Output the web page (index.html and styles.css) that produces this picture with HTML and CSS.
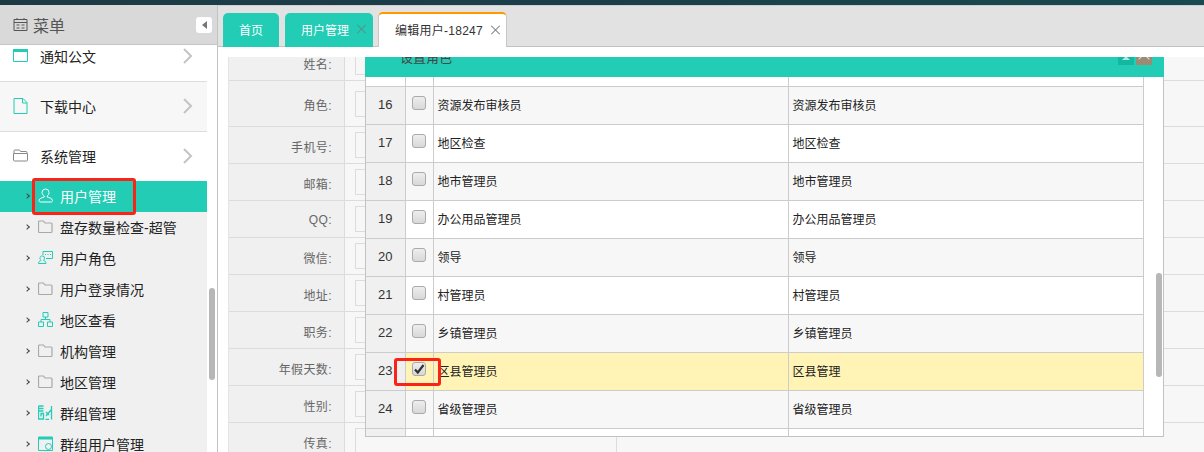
FILE: index.html
```html
<!DOCTYPE html>
<html lang="zh-CN">
<head>
<meta charset="utf-8">
<title>编辑用户</title>
<link rel="stylesheet" href="styles.css">
</head>
<body>
<div class="app">
  <div class="topbar"></div>
  <div class="shell">
    <aside class="side">
      <div class="side-head">
        <svg class="cal" viewBox="0 0 15 15"><path d="M1 2.500h13v11H1zM1 5.500h13M4 1v2M11 1v2M3.500 8h3M8.500 8h3M3.500 11h3M8.500 11h3" fill="none" stroke="#555" stroke-width="1"/></svg>
        <span class="side-title">菜单</span>
        <button class="collapse"><span class="tri"></span></button>
      </div>
      <div class="side-scroll">
        <nav class="menu">
          <div class="top-item">
            <svg class="top-ico" viewBox="0 0 15 13"><path d="M.5.5h14v12H.5z" fill="none" stroke="#22ccb5"/><path d="M0 0h15v3H0z" fill="#22ccb5"/></svg>
            <span>通知公文</span><svg class="chev" viewBox="0 0 10 16"><path d="M1 1l7 7-7 7" fill="none" stroke="#c4c4c4" stroke-width="2"/></svg>
          </div>
          <div class="top-item alt">
            <svg class="top-ico doc" viewBox="0 0 14 16"><path d="M.5.5h9l4 4v11H.5zM9 .5v4.500h4.500" fill="none" stroke="#22ccb5"/></svg>
            <span>下载中心</span><svg class="chev" viewBox="0 0 10 16"><path d="M1 1l7 7-7 7" fill="none" stroke="#c4c4c4" stroke-width="2"/></svg>
          </div>
          <div class="top-item plain">
            <svg class="top-ico" viewBox="0 0 15 13"><path d="M1 4V2a1 1 0 0 1 1-1h4.500l1 1.500H13a1 1 0 0 1 1 1V4M.5 4.500h14V11a1 1 0 0 1-1 1h-12a1 1 0 0 1-1-1z" fill="none" stroke="#888"/></svg>
            <span>系统管理</span><svg class="chev" viewBox="0 0 10 16"><path d="M1 1l7 7-7 7" fill="none" stroke="#c4c4c4" stroke-width="2"/></svg>
          </div>
          <ul class="sub">
            <li class="active"><i class="arrow"></i><svg class="sub-ico" viewBox="0 0 15 15"><path d="M7.500 1a3.500 3.500 0 0 1 3.500 3.500c0 1.500-.8 2.900-1.800 3.500v1c1.500.6 5.300 1.200 5.300 3.500 0 1-.7 1.500-1.500 1.500H2.500c-.8 0-1.500-.5-1.500-1.500 0-2.300 3.800-2.900 5.300-3.500V8C5.300 7.400 4 6 4 4.500A3.500 3.500 0 0 1 7.500 1z" fill="none" stroke="#fff"/></svg><span>用户管理</span></li>
            <li><i class="arrow"></i><svg class="sub-ico" viewBox="0 0 15 13"><path d="M.5 2a1 1 0 0 1 1-1h4l1.500 2h6a1 1 0 0 1 1 1v7.500a1 1 0 0 1-1 1h-11.500a1 1 0 0 1-1-1z" fill="none" stroke="#a8a8a8" stroke-width="1.200"/></svg><span>盘存数量检查-超管</span></li>
            <li><i class="arrow"></i><svg class="sub-ico" viewBox="0 0 15 15"><path d="M5 1.500h9.500v7H8M5 1.500V5M7 4.500h1M9.500 4.500h1M12 4.500h1M4.500 6a2 2 0 0 1 2 2.200c0 1-.5 1.800-1 2.200.8.500 2.500.8 2.500 3.100H.5c0-2.300 1.800-2.600 2.500-3.100-.6-.4-1-1.200-1-2.200A2 2 0 0 1 4.500 6z" fill="none" stroke="#22ccb5"/></svg><span>用户角色</span></li>
            <li><i class="arrow"></i><svg class="sub-ico" viewBox="0 0 15 13"><path d="M.5 2a1 1 0 0 1 1-1h4l1.500 2h6a1 1 0 0 1 1 1v7.500a1 1 0 0 1-1 1h-11.500a1 1 0 0 1-1-1z" fill="none" stroke="#a8a8a8" stroke-width="1.200"/></svg><span>用户登录情况</span></li>
            <li><i class="arrow"></i><svg class="sub-ico" viewBox="0 0 15 15"><path d="M5 .5h5v4.500H5zM.5 10h5v4.500h-5zM9.500 10h5v4.500h-5zM7.500 5v2.500M3 10V7.500h9V10" fill="none" stroke="#22ccb5"/></svg><span>地区查看</span></li>
            <li><i class="arrow"></i><svg class="sub-ico" viewBox="0 0 15 13"><path d="M.5 2a1 1 0 0 1 1-1h4l1.500 2h6a1 1 0 0 1 1 1v7.500a1 1 0 0 1-1 1h-11.500a1 1 0 0 1-1-1z" fill="none" stroke="#a8a8a8" stroke-width="1.200"/></svg><span>机构管理</span></li>
            <li><i class="arrow"></i><svg class="sub-ico" viewBox="0 0 15 13"><path d="M.5 2a1 1 0 0 1 1-1h4l1.500 2h6a1 1 0 0 1 1 1v7.500a1 1 0 0 1-1 1h-11.500a1 1 0 0 1-1-1z" fill="none" stroke="#a8a8a8" stroke-width="1.200"/></svg><span>地区管理</span></li>
            <li><i class="arrow"></i><svg class="sub-ico" viewBox="0 0 15 15"><path d="M.5 1h5M.5 3.500h5M.5 6h5M.5 1v13h5V8.500H3v3M7.500 14.500h3.500M13.500 1v13.500M8 11l5-6M8 7l3 3" fill="none" stroke="#22ccb5" stroke-width="1.300"/></svg><span>群组管理</span></li>
            <li><i class="arrow"></i><svg class="sub-ico" viewBox="0 0 15 15"><path d="M.5 1h14v13.500H.500z" fill="none" stroke="#22ccb5"/><path d="M0 1h15v2.500H0z" fill="#22ccb5"/><circle cx="10.500" cy="10.500" r="3" fill="none" stroke="#22ccb5"/></svg><span>群组用户管理</span></li>
          </ul>
        </nav>
        <div class="side-thumb"></div>
      </div>
    </aside>
    <main class="main">
      <div class="tabs">
        <div class="tab">首页</div>
        <div class="tab closable">用户管理<span class="x"></span></div>
        <div class="tab current">编辑用户-18247<span class="x"></span></div>
      </div>
      <div class="gap"></div>
      <div class="content">
        <div class="form">
          <div class="frow"><label>姓名:</label><div class="val"><span class="box"></span></div></div>
          <div class="frow tall"><label>角色:</label><div class="val"><span class="box"></span></div></div>
          <div class="frow"><label>手机号:</label><div class="val"><span class="box"></span></div></div>
          <div class="frow"><label>邮箱:</label><div class="val"><span class="box"></span></div></div>
          <div class="frow"><label>QQ:</label><div class="val"><span class="box"></span></div></div>
          <div class="frow"><label>微信:</label><div class="val"><span class="box"></span></div></div>
          <div class="frow"><label>地址:</label><div class="val"><span class="box"></span></div></div>
          <div class="frow"><label>职务:</label><div class="val"><span class="box"></span></div></div>
          <div class="frow"><label>年假天数:</label><div class="val"><span class="box"></span></div></div>
          <div class="frow"><label>性别:</label><div class="val"><span class="box"></span></div></div>
          <div class="frow"><label>传真:</label><div class="val"><span class="box"></span></div></div>
        </div>
        <section class="modal">
          <header class="modal-head">
            <span class="modal-title">设置角色</span>
            <span class="mbtn up"><i></i></span>
            <span class="mbtn close"><i></i></span>
          </header>
          <div class="modal-body">
            <table class="grid">
              <colgroup><col class="c-no"><col class="c-ck"><col class="c-a"><col class="c-b"></colgroup>
              <tr class="blank"><td class="no"></td><td></td><td></td><td></td></tr>
              <tr class="even"><td class="no">16</td><td class="ck"><span class="cb"></span></td><td>资源发布审核员</td><td>资源发布审核员</td></tr>
              <tr><td class="no">17</td><td class="ck"><span class="cb"></span></td><td>地区检查</td><td>地区检查</td></tr>
              <tr class="even"><td class="no">18</td><td class="ck"><span class="cb"></span></td><td>地市管理员</td><td>地市管理员</td></tr>
              <tr><td class="no">19</td><td class="ck"><span class="cb"></span></td><td>办公用品管理员</td><td>办公用品管理员</td></tr>
              <tr class="even"><td class="no">20</td><td class="ck"><span class="cb"></span></td><td>领导</td><td>领导</td></tr>
              <tr><td class="no">21</td><td class="ck"><span class="cb"></span></td><td>村管理员</td><td>村管理员</td></tr>
              <tr class="even"><td class="no">22</td><td class="ck"><span class="cb"></span></td><td>乡镇管理员</td><td>乡镇管理员</td></tr>
              <tr class="picked"><td class="no">23</td><td class="ck"><span class="cb"><svg viewBox="0 0 12 12"><path d="M2 6.500l2.800 3L10.500 2" fill="none" stroke="#333" stroke-width="2.200"/></svg></span></td><td>区县管理员</td><td>区县管理</td></tr>
              <tr class="even"><td class="no">24</td><td class="ck"><span class="cb"></span></td><td>省级管理员</td><td>省级管理员</td></tr>
              <tr class="rest"><td class="no"></td><td></td><td></td><td></td></tr>
            </table>
            <div class="modal-track"><div class="modal-thumb"></div></div>
          </div>
        </section>
      </div>
    </main>
  </div>
  <div class="mark mark-user"></div>
  <div class="mark mark-check"></div>
</div>
</body>
</html>
```
FILE: styles.css
```css
* { box-sizing: border-box; }
html, body { margin: 0; padding: 0; }
body { font-family: "Liberation Sans", "Noto Sans CJK SC", sans-serif; font-size: 12px; color: #222; background: #fff; }
.app { position: relative; width: 1204px; height: 452px; overflow: hidden; display: flex; flex-direction: column; }
.topbar { height: 5px; flex: none; background: linear-gradient(90deg, #1c3a45, #1b3f49 50%, #174b4f); }
.shell { flex: 1; display: flex; min-height: 0; }

/* sidebar */
.side { width: 218px; flex: none; display: flex; flex-direction: column; border-right: 1px solid #c2c2c2; background: #fff; }
.side-head { height: 40px; flex: none; display: flex; align-items: center; padding: 0 5px 0 13px; background: #d9d9d9; border-bottom: 1px solid #c6c6c6; }
.cal { width: 15px; height: 15px; margin-right: 5px; }
.side-title { font-size: 16px; color: #555; flex: 1; }
.collapse { width: 16px; height: 16px; margin-right: 0; padding: 0; border: 0; border-radius: 3px; background: #fff; display: flex; align-items: center; justify-content: center; }
.tri { width: 0; height: 0; border: 4px solid transparent; border-right: 5px solid #777; border-left: 0; }
.side-scroll { flex: 1; display: flex; overflow: hidden; position: relative; min-height: 0; }
.menu { width: 207px; flex: none; margin-top: -13px; }
.top-item { height: 50px; display: flex; align-items: center; padding: 0 0 2px 13px; font-size: 14px; color: #222; border-bottom: 1px solid #ddd; background: #fff; }
.top-item.alt { background: #f7f7f7; }
.top-item.plain { height: 49px; border-bottom: 0; }
.top-item span { flex: 1; padding-left: 12px; }
.top-ico { width: 15px; height: 13px; flex: none; }
.top-ico.doc { height: 16px; }
.chev { width: 10px; height: 16px; margin-right: 14px; flex: none; }
.sub { margin: 0; padding: 0; list-style: none; background: #f0f0f0; }
.sub li { height: 31px; display: flex; align-items: center; padding: 0 0 2px 25px; font-size: 14px; color: #222; }
.sub li.active { background: #22ccb5; color: #fff; }
.arrow { width: 4px; height: 4px; flex: none; margin-right: 9px; border-top: 1px solid #444; border-right: 1px solid #444; transform: rotate(45deg); }
.sub-ico { width: 15px; height: 15px; flex: none; margin-right: 7px; }
.side-thumb { position: absolute; left: 209px; top: 243px; width: 6px; height: 92px; border-radius: 3px; background: #b7b7b7; }

/* main */
.main { flex: 1; min-width: 0; display: flex; flex-direction: column; }
.tabs { height: 42px; flex: none; display: flex; align-items: flex-end; gap: 6px; padding-left: 5px; background: #e2e2e2; border-bottom: 1px solid #c2c2c2; border-top: 1px solid #cfcfcf; }
.tab { height: 34px; margin-bottom: -1px; padding: 0 16px 2px; display: flex; align-items: center; border-radius: 5px 5px 0 0; background: #22ccb5; color: #fff; font-size: 12px; }
.tab.closable { padding-right: 7px; }
.tab.current { position: relative; height: 35px; margin-bottom: -1px; margin-left: -1px; padding: 0 6px 2px 16px; background: #fff; color: #333; letter-spacing: .25px; border: 1px solid #c8c8c8; border-top: 2px solid #f90; border-bottom: 0; }
.x { position: relative; width: 10px; height: 10px; margin-left: 7px; }
.x::before, .x::after { content: ""; position: absolute; left: 5px; top: -1px; width: 1px; height: 12px; background: #777; transform: rotate(45deg); }
.x::after { transform: rotate(-45deg); }
.tab.closable .x::before, .tab.closable .x::after { background: #5b8f86; }
.gap { height: 10px; flex: none; background: #fff; }
.content { flex: 1; position: relative; overflow: hidden; min-height: 0; padding-left: 10px; }

/* form behind the dialog */
.form { margin-top: -13px; background: #f7f7f7; border-left: 1px solid #e4e4e4; }
.frow { height: 37px; display: flex; border-bottom: 1px solid #dcdcdc; }
.frow.tall { height: 46px; }
.frow label { width: 116px; flex: none; display: flex; align-items: center; justify-content: flex-end; padding: 2px 12px 0 0; background: #f0f0f0; border-right: 1px solid #dcdcdc; color: #666; font-size: 12px; letter-spacing: .4px; }
.val { flex: 1; display: flex; align-items: center; padding-left: 10px; }
.box { width: 262px; height: 26px; border: 1px solid #dcdcdc; background: #f7f7f7; }

/* dialog */
.modal { position: absolute; left: 147px; top: -20px; width: 799px; height: 400px; display: flex; flex-direction: column; background: #fff; border: 1px solid #c2c2c2; border-top: 0; }
.modal-head { height: 40px; flex: none; display: flex; align-items: flex-start; padding: 12px 12px 0 35px; background: #22ccb5; position: relative; margin-left: -1px; margin-right: -1px; }
.modal-title { flex: 1; font-size: 13px; line-height: 18px; color: #444; }
.mbtn { width: 16px; height: 28px; margin-top: -12px; margin-left: 2px; display: flex; align-items: flex-end; justify-content: center; padding-bottom: 5px; overflow: hidden; }
.mbtn.up { background: #14b8a0; }
.mbtn.close { background: #9c8a75; }
.mbtn.up i { width: 0; height: 0; border: 4px solid transparent; border-bottom: 4px solid #a8ece0; border-top: 0; }
.mbtn.close i { width: 8px; height: 8px; margin-bottom: -3px; border-top: 1px solid #cfe8dc; border-left: 1px solid #cfe8dc; transform: rotate(45deg); }
.modal-body { flex: 1; display: flex; min-height: 0; overflow: hidden; }
.grid { width: 777px; flex: none; table-layout: fixed; border-collapse: collapse; align-self: flex-start; }
.c-no { width: 39px; }
.c-ck { width: 28px; }
.c-a { width: 355px; }
.c-b { width: 355px; }
.grid td { height: 38px; padding: 0 0 2px 4px; border-right: 1px solid #ccc; border-bottom: 1px solid #ccc; font-size: 12px; color: #222; }
.grid tr.blank td { height: 9px; padding: 0; background: #fff; }
.grid tr.rest td { height: 8px; padding: 0; border-bottom: 0; }
.grid td.no { padding: 0 0 1px; text-align: center; background: #f0f0f0; font-size: 13px; color: #333; }
.grid td.ck { padding: 0; text-align: center; }
.grid tr.even td { background: #f7f7f7; }
.grid tr.even td.no { background: #f0f0f0; }
.grid tr.picked td { background: #fff4b5; }
.grid tr.picked td.no { background: #f0f0f0; }
.cb { display: inline-block; width: 14px; height: 14px; margin-bottom: 4px; vertical-align: middle; border: 1px solid #aaa; border-radius: 3px; background: linear-gradient(#eee, #d8d8d8); }
.cb svg { display: block; width: 12px; height: 12px; }
.modal-track { flex: 1; position: relative; }
.modal-thumb { position: absolute; left: 12px; top: 196px; width: 6px; height: 104px; border-radius: 3px; background: #b7b7b7; }

/* red annotations */
.mark { position: absolute; border: 3px solid #fa2318; border-radius: 3px; }
.mark-user { left: 32px; top: 178px; width: 104px; height: 37px; }
.mark-check { left: 394px; top: 358px; width: 47px; height: 28px; }
```
